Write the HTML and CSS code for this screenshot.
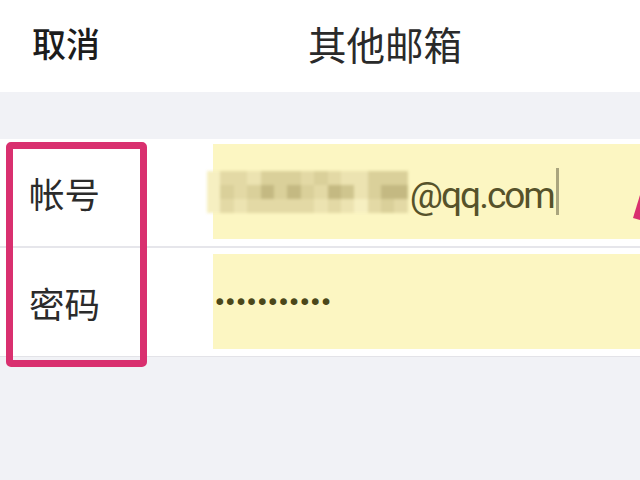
FILE: index.html
```html
<!DOCTYPE html>
<html lang="zh-CN">
<head>
<meta charset="utf-8">
<title>其他邮箱</title>
<link rel="stylesheet" href="styles.css">
</head>
<body>
<div class="screen">
  <header class="nav">
    <span class="nav-cancel">取消</span>
    <h1 class="nav-title">其他邮箱</h1>
  </header>
  <div class="gap"></div>
  <section class="form">
    <div class="row row-account">
      <span class="row-label">帐号</span>
      <div class="field">
        <span class="mosaic" aria-hidden="true">
          <i class="s0"></i><i class="s2"></i><i class="s2"></i><i class="s1"></i><i class="s3"></i><i class="s3"></i><i class="s3"></i><i class="s2"></i><i class="s3"></i><i class="s2"></i><i class="s1"></i><i class="s1"></i><i class="s3"></i><i class="s3"></i><i class="s3"></i>
          <i class="s0"></i><i class="s3"></i><i class="s2"></i><i class="s3"></i><i class="s5"></i><i class="s3"></i><i class="s5"></i><i class="s3"></i><i class="s2"></i><i class="s5"></i><i class="s4"></i><i class="s1"></i><i class="s3"></i><i class="s5"></i><i class="s5"></i>
          <i class="s0"></i><i class="s2"></i><i class="s1"></i><i class="s2"></i><i class="s2"></i><i class="s2"></i><i class="s2"></i><i class="s2"></i><i class="s1"></i><i class="s2"></i><i class="s1"></i><i class="s0"></i><i class="s2"></i><i class="s3"></i><i class="s2"></i>
        </span>
        <span class="email">@qq.com</span>
        <span class="caret"></span>
      </div>
    </div>
    <div class="row row-password">
      <span class="row-label">密码</span>
      <div class="field">
        <span class="password">•••••••••••</span>
      </div>
    </div>
  </section>
  <div class="highlight"></div>
  <svg class="arrow" viewBox="0 0 10 30" width="10" height="30" aria-hidden="true">
    <polygon points="10,3 3,26 10,28" fill="#d9306f"/>
  </svg>
</div>
</body>
</html>
```
FILE: styles.css
```css
* { box-sizing: border-box; }

html, body {
  margin: 0;
  padding: 0;
  background: #f1f2f6;
}

body {
  font-family: "Noto Sans CJK SC", "Noto Sans", sans-serif;
  color: #222;
}

.screen {
  position: relative;
  width: 640px;
  height: 480px;
  overflow: hidden;
}

.nav {
  height: 92px;
  background: #fff;
  display: flex;
  align-items: center;
  padding: 0 0 6px 32px;
}

.nav-cancel {
  font-size: 34px;
  font-weight: 500;
  line-height: 1;
  color: #1c1c1c;
}

.nav-title {
  margin: 0 0 0 208px;
  font-size: 38.5px;
  font-weight: 400;
  line-height: 1;
  color: #2a2a2a;
}

.gap {
  height: 47px;
}

.form {
  background: #fff;
}

.row {
  display: grid;
  grid-template-columns: 213px 1fr;
  align-items: center;
}

.row-account {
  padding: 5px 0 7px;
  border-bottom: 2px solid #e6e6eb;
}

.row-password {
  padding: 6px 0 7px;
  border-bottom: 1px solid #e3e3e8;
}

.row-label {
  padding-left: 29px;
  font-size: 35.5px;
  line-height: 1;
  color: #2b2b2b;
  position: relative;
  top: 1px;
}

.field {
  height: 95px;
  background: #fcf6c2;
  display: flex;
  align-items: center;
}

.mosaic {
  display: grid;
  grid-template-columns: repeat(15, 13.4px);
  grid-auto-rows: 14px;
  margin-left: -6px;
  filter: blur(1.5px);
}

.mosaic i { display: block; }
.mosaic .s0 { background: #f6efc1; }
.mosaic .s1 { background: #ece3b1; }
.mosaic .s2 { background: #e3d9a5; }
.mosaic .s3 { background: #dad09a; }
.mosaic .s4 { background: #cfc58e; }
.mosaic .s5 { background: #c4b982; }

.email {
  font-family: Roboto, "Liberation Sans", sans-serif;
  font-size: 37px;
  letter-spacing: -2px;
  line-height: 1;
  color: #56522a;
  padding-top: 8px;
  margin-left: 2px;
}

.caret {
  width: 3px;
  height: 47px;
  margin-left: 2px;
  background: #aaa57e;
}

.password {
  padding-left: 0;
  font-family: "DejaVu Sans", sans-serif;
  font-size: 23px;
  letter-spacing: -2.95px;
  line-height: 1;
  color: #4b4719;
  position: relative;
  top: 1px;
}

.highlight {
  position: absolute;
  left: 6px;
  top: 142px;
  width: 141px;
  height: 225px;
  border: 7px solid #d9306f;
  border-radius: 5px;
}

.arrow {
  position: absolute;
  left: 630px;
  top: 192px;
}
```
